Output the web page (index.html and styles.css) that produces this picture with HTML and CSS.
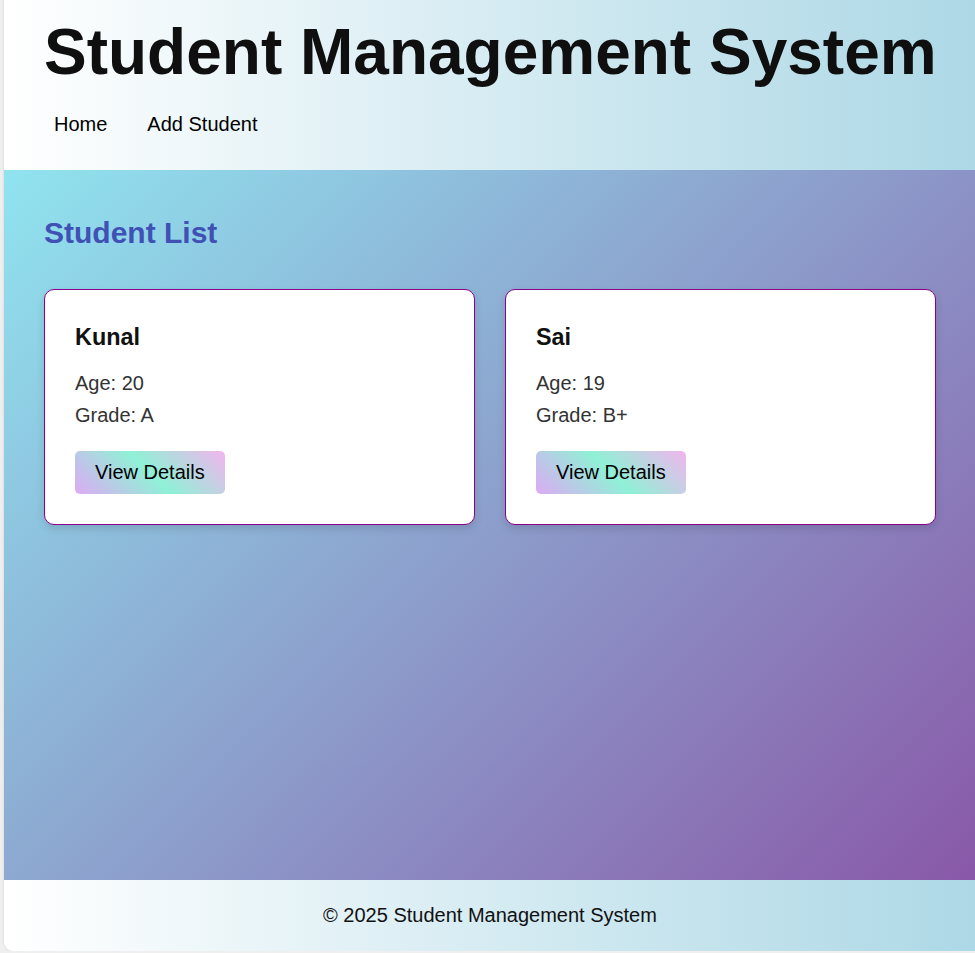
FILE: index.html
```html
<!DOCTYPE html>
<html lang="en">
<head>
<meta charset="UTF-8">
<title>Student Management System</title>
<link rel="stylesheet" href="styles.css">
</head>
<body>
<div class="app">
  <header class="site-header">
    <h1 class="site-title">Student Management System</h1>
    <nav class="site-nav">
      <a class="nav-link" href="#">Home</a>
      <a class="nav-link" href="#">Add Student</a>
    </nav>
  </header>
  <main class="main">
    <h2 class="section-title">Student List</h2>
    <div class="card-grid">
      <div class="card">
        <h3 class="card-name">Kunal</h3>
        <p class="card-line">Age: 20</p>
        <p class="card-line">Grade: A</p>
        <button class="btn">View Details</button>
      </div>
      <div class="card">
        <h3 class="card-name">Sai</h3>
        <p class="card-line">Age: 19</p>
        <p class="card-line">Grade: B+</p>
        <button class="btn">View Details</button>
      </div>
    </div>
  </main>
  <footer class="site-footer">
    <p class="footer-text">&copy; 2025 Student Management System</p>
  </footer>
</div>
</body>
</html>
```

FILE: styles.css
```css
html, body {
  margin: 0;
  padding: 0;
}
body {
  background: #efefef;
  font-family: "Liberation Sans", Arial, sans-serif;
  padding-left: 4px;
  overflow: hidden;
}
.app {
  height: 951px;
  width: 972px;
  display: flex;
  flex-direction: column;
  border-radius: 0 0 0 9px;
  overflow: hidden;
  box-shadow: 0 0 3px rgba(0,0,0,0.12);
}
.site-header {
  background: linear-gradient(to right, #ffffff, #add8e6);
  padding: 15px 40px 24px;
}
.site-title {
  margin: 0;
  font-size: 64px;
  line-height: 74px;
  font-weight: bold;
  color: #0f0f0f;
  white-space: nowrap;
}
.site-nav {
  margin-top: 14px;
  display: flex;
}
.nav-link {
  display: inline-block;
  padding: 10px 10px;
  margin-right: 20px;
  font-size: 20px;
  line-height: 23px;
  color: #000;
  text-decoration: none;
}
.main {
  flex: 1;
  background: linear-gradient(135deg, #90e4ef 0%, #8958a8 100%);
  padding: 20px 40px;
}
.section-title {
  margin: 26px 0 39px;
  font-size: 30px;
  line-height: 34px;
  color: #3f51b5;
}
.card-grid {
  display: grid;
  grid-template-columns: 1fr 1fr;
  gap: 30px;
}
.card {
  background: #fff;
  border: 1px solid #8b008b;
  border-radius: 10px;
  padding: 20px 30px 30px;
  box-shadow: 0 4px 8px rgba(0,0,0,0.12);
}
.card-name {
  margin: 15px 0 22px;
  font-size: 23.4px;
  line-height: 25px;
  color: #111;
}
.card-line {
  margin: 9px 0 0;
  font-size: 20px;
  line-height: 23px;
  color: #333;
}
.card-name + .card-line {
  margin-top: 0;
}
.btn {
  margin-top: 24px;
  display: block;
  border: none;
  border-radius: 5px;
  padding: 10px 20px;
  font-family: "Liberation Sans", Arial, sans-serif;
  font-size: 20px;
  line-height: 23px;
  color: #000;
  background: linear-gradient(45deg, #dcaaf4 0%, #8ff1d6 50%, #f2b4ee 100%);
  cursor: pointer;
}
.site-footer {
  background: linear-gradient(to right, #ffffff, #add8e6);
  text-align: center;
  padding: 24px 0;
}
.footer-text {
  margin: 0;
  font-size: 20px;
  line-height: 23px;
  color: #111;
}
```
